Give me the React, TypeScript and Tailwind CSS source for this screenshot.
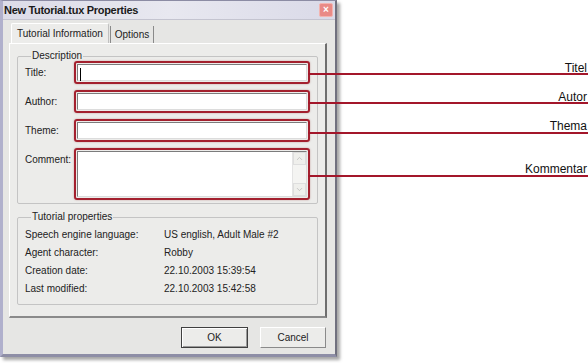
import React from 'react';
import { ChevronUp, ChevronDown } from 'lucide-react';

// Sunken edit box wrapped in the red highlight frame
const Field: React.FC<{ h: string; caret?: boolean; multiline?: boolean }> = ({ h, caret, multiline }) => (
  <div className={`flex-1 ${h} rounded-[3px] border-2 border-[#a3202e] p-[1px] shadow-[0_0_2px_rgba(120,0,0,0.35)]`}>
    <div className="h-full flex bg-white border border-t-[#7c7c7c] border-l-[#7c7c7c] border-b-[#dcdcdc] border-r-[#dcdcdc]">
      <div className="flex-1 pl-[2px] pt-[3px]">
        {caret && <div className="w-[1px] h-[13px] bg-black" />}
      </div>
      {multiline && (
        <div className="w-[14px] flex flex-col justify-between bg-[#f4f4f2] border-l border-[#e4e4e4]">
          <div className="h-[13px] flex items-center justify-center bg-[#efefec] border border-[#dedede]">
            <ChevronUp size={9} strokeWidth={2} className="text-[#b8b8b8]" />
          </div>
          <div className="h-[13px] flex items-center justify-center bg-[#efefec] border border-[#dedede]">
            <ChevronDown size={9} strokeWidth={2} className="text-[#b8b8b8]" />
          </div>
        </div>
      )}
    </div>
  </div>
);

const Group: React.FC<{ title: string; className?: string; children: React.ReactNode }> = ({ title, className, children }) => (
  <fieldset className={`border border-[#c4c4c4] rounded-[2px] ${className ?? ''}`}>
    <legend className="ml-[6px] px-[1px] leading-[12px] text-[#222]">{title}</legend>
    {children}
  </fieldset>
);

const props = [
  ['Speech engine language:', 'US english, Adult Male #2'],
  ['Agent character:', 'Robby'],
  ['Creation date:', '22.10.2003 15:39:54'],
  ['Last modified:', '22.10.2003 15:42:58'],
];

const notes = [
  { label: 'Titel', line: 'top-[73px]', text: 'top-[59px]' },
  { label: 'Autor', line: 'top-[102px]', text: 'top-[88px]' },
  { label: 'Thema', line: 'top-[132px]', text: 'top-[117px]' },
  { label: 'Kommentar', line: 'top-[175px]', text: 'top-[160px]' },
];

export default function App() {
  return (
    <div className="relative w-[588px] h-[363px] bg-white overflow-hidden font-['Liberation_Sans',Arial,sans-serif] text-[10px] text-[#222]">
      {/* Dialog window */}
      <div className="w-[337px] h-[357px] flex flex-col bg-[#e6e6e4] border border-[#8c8ca4] border-l-[3px] border-l-[#b0b0cc] border-b-[3px] border-b-[#8e8ea6] border-r-[2px] border-r-[#70707e] shadow-[3px_3px_3px_rgba(0,0,0,0.35)]">
        {/* Title bar */}
        <div className="h-[19px] flex items-center justify-between pl-[1px] pr-[2px] bg-gradient-to-r from-[#dcdce8] via-[#e8e8f0] to-[#dadae8] border-b border-[#c4c4d0]">
          <span className="font-bold text-[11px] tracking-[-0.3px] text-[#1a1a1a]">New Tutorial.tux Properties</span>
          <div className="w-[14px] h-[14px] flex items-center justify-center rounded-[2px] bg-[#e98a86] border border-[#f3b4b0] text-white text-[10px] font-bold leading-none">
            ×
          </div>
        </div>

        <div className="flex-1 flex flex-col pl-[6px] pr-[8px]">
          {/* Tabs */}
          <div className="mt-[3px] h-[20px] flex items-end">
            <div className="h-[20px] ml-[2px] px-[5px] flex items-center bg-[#ececea] border border-b-0 border-[#c0c0c0] rounded-t-[2px] border-t-white border-l-white">
              Tutorial Information
            </div>
            <div className="h-[17px] px-[4px] flex items-center border-l border-r border-[#8a8a8a] ml-[1px]">
              Options
            </div>
          </div>

          {/* Tab panel */}
          <div className="h-[275px] flex flex-col px-[7px] pt-[6px] bg-[#ececea] border border-t-white border-l-white border-r-[2px] border-r-[#6e6e6e] border-b-[2px] border-b-[#8a8a8a]">
            <Group title="Description" className="pl-[7px] pr-[7px] pb-[3px]">
              <div className="flex flex-col gap-[6px] -mt-[1px]">
                <div className="flex items-center">
                  <span className="w-[49px]">Title:</span>
                  <Field h="h-[23px]" caret />
                </div>
                <div className="flex items-center">
                  <span className="w-[49px]">Author:</span>
                  <Field h="h-[23px]" />
                </div>
                <div className="flex items-center">
                  <span className="w-[49px]">Theme:</span>
                  <Field h="h-[23px]" />
                </div>
                <div className="flex items-start">
                  <span className="w-[49px] pt-[4px]">Comment:</span>
                  <Field h="h-[52px]" multiline />
                </div>
              </div>
            </Group>

            <Group title="Tutorial properties" className="mt-[7px] pl-[7px] pr-[7px] pt-[2px] pb-[7px]">
              {props.map(([k, v]) => (
                <div key={k} className="flex items-center h-[18px]">
                  <span className="w-[139px]">{k}</span>
                  <span>{v}</span>
                </div>
              ))}
            </Group>
          </div>

          {/* Buttons */}
          <div className="mt-[9px] flex justify-end gap-[12px] pr-[1px]">
            <div className="w-[67px] h-[21px] flex items-center justify-center bg-[#ececea] border border-[#404040] shadow-[inset_1px_1px_0_#ffffff,inset_-1px_-1px_0_#9a9a9a]">
              OK
            </div>
            <div className="w-[66px] h-[21px] flex items-center justify-center bg-[#ececea] border border-t-white border-l-white border-b-[#8a8a8a] border-r-[#8a8a8a]">
              Cancel
            </div>
          </div>
        </div>
      </div>

      {/* Annotation callouts */}
      {notes.map((n) => (
        <React.Fragment key={n.label}>
          <div className={`absolute left-[308px] right-0 h-[2px] bg-[#a3162a] ${n.line}`} />
          <span className={`absolute right-[1px] text-[12px] text-[#111] ${n.text}`}>{n.label}</span>
        </React.Fragment>
      ))}
    </div>
  );
}
